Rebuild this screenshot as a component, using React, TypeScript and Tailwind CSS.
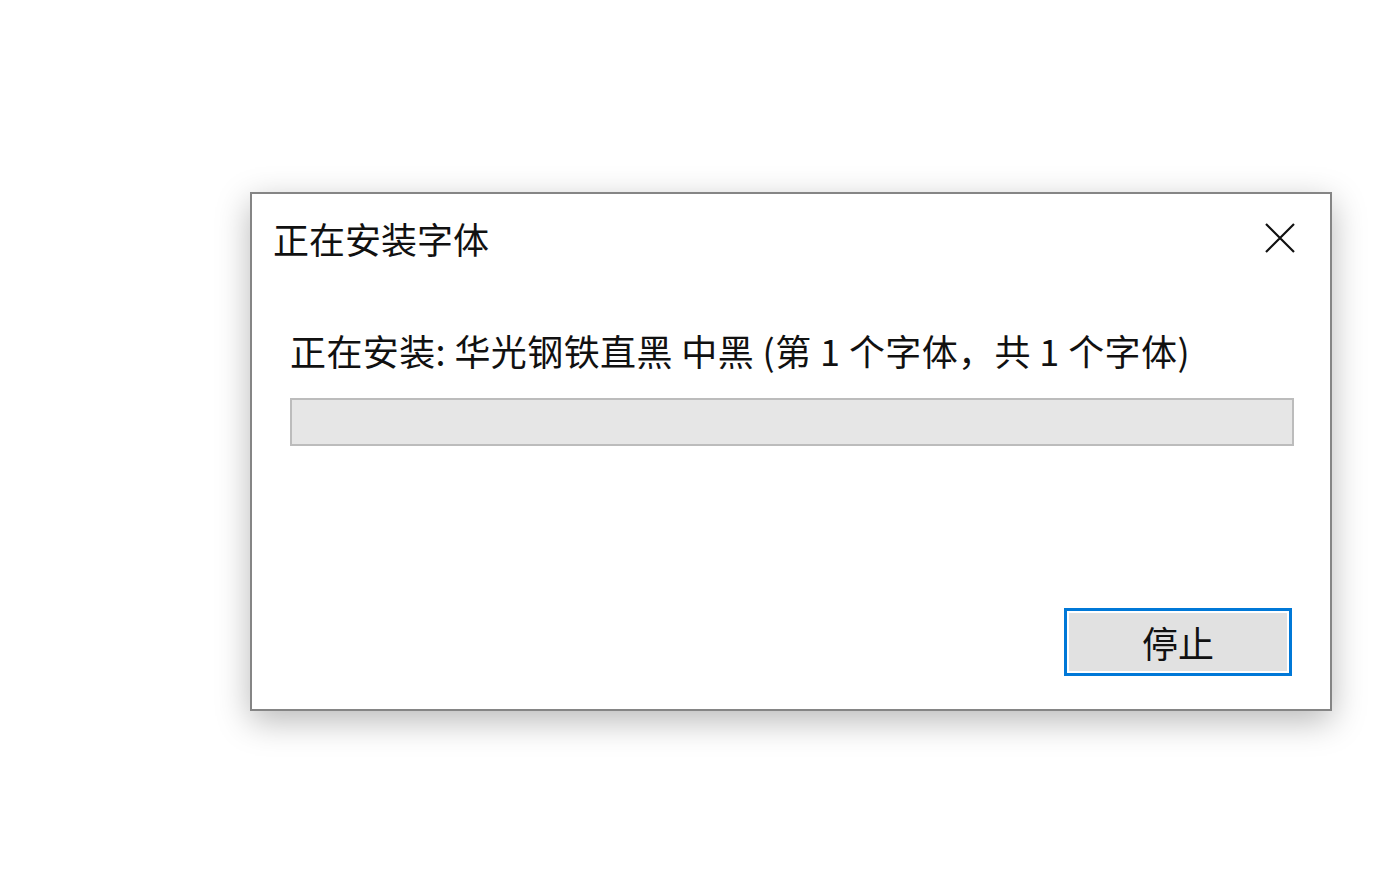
import React from "react";

export default function App() {
  const font = {
    fontFamily: '"Microsoft YaHei", "Noto Sans CJK SC", "Noto Sans", sans-serif',
  };
  return (
    <div className="w-[1400px] h-[875px] bg-white overflow-hidden pt-[192px] pl-[250px]" style={font}>
      <div className="w-[1082px] h-[519px] border-2 border-[#858585] bg-white shadow-[0_10px_32px_rgba(0,0,0,0.28)] flex flex-col">
        <div className="h-[88px] flex items-center justify-between pl-[21px] pr-[34px]">
          <span className="text-[36px] leading-none text-[#111]">正在安装字体</span>
          <svg width="32" height="32" viewBox="0 0 32 32" className="text-[#111]">
            <path d="M2 2 L30 30 M30 2 L2 30" stroke="currentColor" strokeWidth="2.2" fill="none" />
          </svg>
        </div>
        <div className="flex flex-col pl-[38px] pr-[36px] flex-1">
          <div className="h-[48px] mt-[44px] flex items-center text-[36px] leading-none text-[#111] tracking-[0.4px] whitespace-nowrap">
            正在安装: 华光钢铁直黑 中黑 (第 1 个字体，共 1 个字体)
          </div>
          <div className="mt-[24px] h-[48px] border-2 border-[#bcbcbc] bg-[#e6e6e6]" />
          <div className="flex-1" />
          <div className="flex justify-end pr-[2px] pb-[33px]">
            <div className="w-[228px] h-[68px] border-[3px] border-[#0078d7] p-[2px]">
              <div className="w-full h-full bg-[#e1e1e1] flex items-center justify-center text-[36px] leading-none text-[#111]">
                停止
              </div>
            </div>
          </div>
        </div>
      </div>
    </div>
  );
}
